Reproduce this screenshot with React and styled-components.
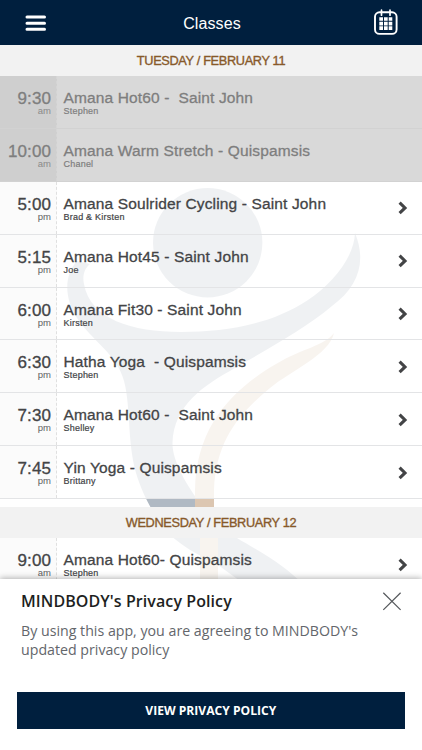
import styled, { createGlobalStyle } from 'styled-components'

const GlobalStyle = createGlobalStyle`
    * {
        box-sizing: border-box;
    }

    body {
        margin: 0;
        background: #fff;
        color: #434446;
        font-family: "Liberation Sans", Arial, sans-serif;
    }
`

const Screen = styled.div`
    position: relative;
    height: 750px;
    display: flex;
    flex-direction: column;
    overflow: hidden;
`

const Header = styled.header`
    flex: none;
    height: 45px;
    padding: 0 23px 0 25px;
    display: grid;
    grid-template-columns: 26px 1fr 26px;
    align-items: center;
    background: #001f3e;
    color: #fff;

    h1 {
        margin: 2px 0 0;
        font-size: 16px;
        font-weight: 400;
        letter-spacing: 0.1px;
        text-align: center;
    }
`

const IconButton = styled.button`
    display: flex;
    padding: 0;
    border: 0;
    background: none;
    color: inherit;
`

const Schedule = styled.main`
    position: relative;
    flex: 1;
`

const Watermark = styled.svg`
    position: absolute;
    top: 0;
    left: 0;
    z-index: -1;
`

const DayTitle = styled.h2`
    margin: 0;
    height: 31px;
    display: flex;
    align-items: center;
    justify-content: center;
    background: #f2f2f2;
    color: #87592a;
    font-size: 12.75px;
    font-weight: 400;
    letter-spacing: -0.34px;
    -webkit-text-stroke: 0.35px;
`

const ClassList = styled.ul`
    margin: 0 0 8px;
    padding: 0;
    list-style: none;
`

const StyledRow = styled.li`
    height: 52.9px;
    display: grid;
    grid-template-columns: 57px 1fr 25px;
    border-bottom: 1.5px solid ${p => p.$past ? '#d2d2d2' : '#e3e4e6'};
    background: ${p => p.$past ? '#d9d9d9' : 'rgb(255 255 255 / 80%)'};
    color: ${p => p.$past ? '#7e7e7e' : '#434446'};

    .time {
        padding: 13px 5px 0 0;
        border-right: 1px dashed ${p => p.$past ? '#d5d5d5' : '#e0e0e0'};
        background: ${p => p.$past ? '#cfcfcf' : 'rgb(0 0 0 / 1.5%)'};
        text-align: right;
    }

    .hour {
        font-size: 17px;
        line-height: 20px;
        letter-spacing: 0.1px;
        -webkit-text-stroke: 0.3px;
    }

    .half {
        font-size: 9.5px;
        line-height: 3px;
        opacity: 0.85;
    }

    .info {
        padding: 13px 0 0 6.5px;
        white-space: pre;
    }

    .name {
        font-size: 15.5px;
        line-height: 18px;
        letter-spacing: 0.14px;
        -webkit-text-stroke: 0.3px;
    }

    .teacher {
        font-size: 9px;
        line-height: 8px;
        letter-spacing: 0.22px;
        -webkit-text-stroke: 0.2px;
    }

    svg {
        margin-top: 18.5px;
    }
`

const PolicySheet = styled.section`
    position: absolute;
    left: 0;
    right: 0;
    bottom: 0;
    height: 171.5px;
    padding: 11px 17px 0 16.5px;
    background: #fff;
    box-shadow: 0 -1px 6px rgb(0 0 0 / 30%);
    font-family: "Open Sans", sans-serif;

    .top {
        display: flex;
        justify-content: space-between;
        padding: 0 3px 0 4.5px;
    }

    h3 {
        margin: 0;
        color: #1e1f22;
        font-size: 16px;
        line-height: 22px;
        font-weight: 600;
        letter-spacing: 0.08px;
    }

    p {
        margin: 9px 0 33.5px;
        padding-left: 4.5px;
        color: #63666b;
        font-size: 14.2px;
        line-height: 19px;
    }
`

const PolicyButton = styled.button`
    width: 100%;
    height: 36.5px;
    padding: 1px 0 0;
    border: 0;
    background: #001f3e;
    color: #fff;
    font: 700 12.1px "Open Sans", sans-serif;
`

const DAYS = [
    {
        title: 'TUESDAY / FEBRUARY 11',
        classes: [
            { hour: '9:30', half: 'am', name: 'Amana Hot60 -  Saint John', teacher: 'Stephen', past: true },
            { hour: '10:00', half: 'am', name: 'Amana Warm Stretch - Quispamsis', teacher: 'Chanel', past: true },
            { hour: '5:00', half: 'pm', name: 'Amana Soulrider Cycling - Saint John', teacher: 'Brad & Kirsten' },
            { hour: '5:15', half: 'pm', name: 'Amana Hot45 - Saint John', teacher: 'Joe' },
            { hour: '6:00', half: 'pm', name: 'Amana Fit30 - Saint John', teacher: 'Kirsten' },
            { hour: '6:30', half: 'pm', name: 'Hatha Yoga  - Quispamsis', teacher: 'Stephen' },
            { hour: '7:30', half: 'pm', name: 'Amana Hot60 -  Saint John', teacher: 'Shelley' },
            { hour: '7:45', half: 'pm', name: 'Yin Yoga - Quispamsis', teacher: 'Brittany' },
        ],
    },
    {
        title: 'WEDNESDAY / FEBRUARY 12',
        classes: [
            { hour: '9:00', half: 'am', name: 'Amana Hot60- Quispamsis', teacher: 'Stephen' },
        ],
    },
]

const MenuIcon = () => (
    <svg width="22" height="18" viewBox="0 0 22 18" stroke="#fff" strokeWidth="3" strokeLinecap="round">
        <path d="M2 3h17.5M2 9.2h17.5M2 15.3h17.5" />
    </svg>
)

const CalendarIcon = () => (
    <svg width="26" height="28" viewBox="0 0 26 28" fill="none" stroke="#fff">
        <rect x="2" y="3.3" width="21.6" height="21.6" rx="4.5" strokeWidth="1.9" />
        <path d="M8.5 1.2v5M17 1.2v5" strokeWidth="1.7" strokeLinecap="round" />
        <path d="M6.3 10h13M6.3 14.6h13M6.3 19.1h13" strokeWidth="3.6" strokeDasharray="3.7 1" />
    </svg>
)

const Chevron = () => (
    <svg width="12" height="16" viewBox="0 0 12 16" fill="none" stroke="#434446" strokeWidth="3.1">
        <path d="M2.6 2.6 8 7.9 2.6 13.2" />
    </svg>
)

const CloseIcon = () => (
    <svg width="20" height="22" viewBox="0 0 20 22" stroke="#55585c" strokeWidth="1.2">
        <path d="M1.3 2.7 18.6 19.9M18.6 2.7 1.3 19.9" />
    </svg>
)

// Stylised figure with raised arms behind the list, clipped by the day titles
const Logo = () => (
    <Watermark width="422" height="705" viewBox="0 45 422 705">
        <g fill="#b0b9c3">
            <circle cx="207.7" cy="242.7" r="54.7" />
            <path d="M77 261C64 275 64 298 77 318C92 341 117 354 124 381C131 408 127 440 136 473C142 493 150 507 160 523C176 546 204 557 218 565L240 581H300C275 558 253 548 237 538C220 528 211 515 202 505C187 487 172 460 172.5 443C174 405 203 386 235 368C268 349 306 328 332 306C358 287 367 262 355 233C354 258 332 284 308 300C270 325 225 332 181 332C132 332 90 319 84 284C82 275 85 268 90 264Z" />
        </g>
        <path fill="#dcc6b1" d="M334 333C324 346 303 348 276 364C235 388 196 424 195 490V520L200 538V585H218V538L214 520V490C216 440 240 413 270 388C292 370 329 355 334 333Z" />
    </Watermark>
)

const ClassRow = ({ hour, half, name, teacher, past }) => (
    <StyledRow $past={past}>
        <div className="time">
            <div className="hour">{hour}</div>
            <div className="half">{half}</div>
        </div>
        <div className="info">
            <div className="name">{name}</div>
            <div className="teacher">{teacher}</div>
        </div>
        {!past && <Chevron />}
    </StyledRow>
)

const App = () => (
    <>
        <GlobalStyle />
        <Screen>
            <Header>
                <IconButton aria-label="Menu"><MenuIcon /></IconButton>
                <h1>Classes</h1>
                <IconButton aria-label="Calendar"><CalendarIcon /></IconButton>
            </Header>
            <Schedule>
                <Logo />
                {DAYS.map(day => (
                    <div key={day.title}>
                        <DayTitle>{day.title}</DayTitle>
                        <ClassList>
                            {day.classes.map(c => <ClassRow key={c.hour} {...c} />)}
                        </ClassList>
                    </div>
                ))}
            </Schedule>
            <PolicySheet>
                <div className="top">
                    <h3>MINDBODY's Privacy Policy</h3>
                    <IconButton aria-label="Close"><CloseIcon /></IconButton>
                </div>
                <p>By using this app, you are agreeing to MINDBODY's updated privacy policy</p>
                <PolicyButton>VIEW PRIVACY POLICY</PolicyButton>
            </PolicySheet>
        </Screen>
    </>
)

export default App
